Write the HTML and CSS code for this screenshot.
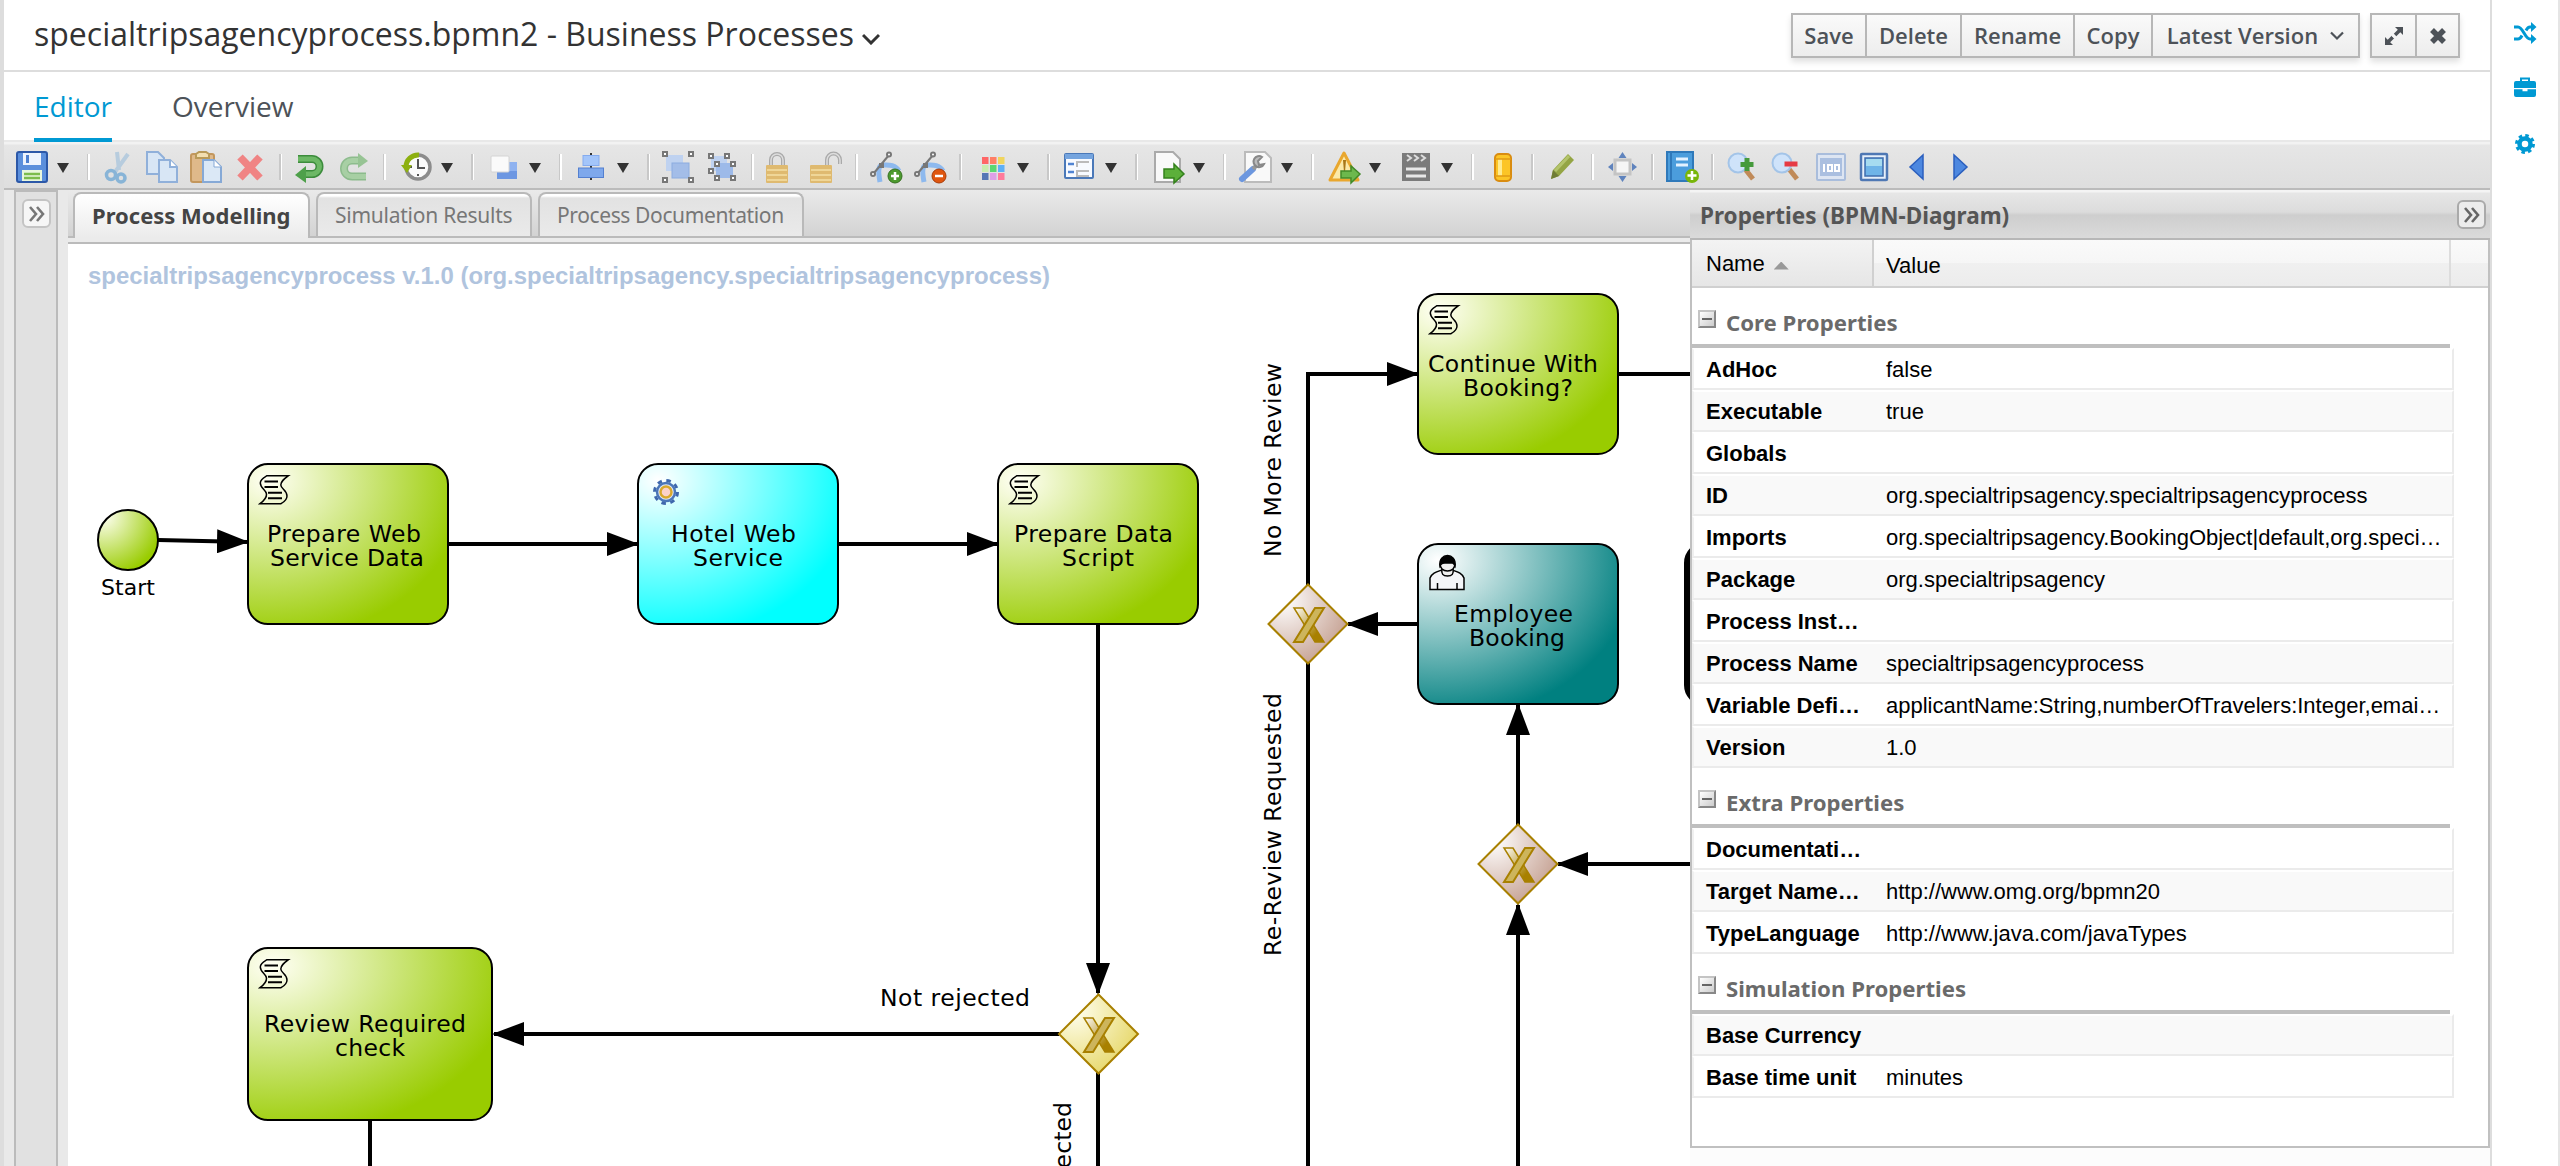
FILE: index.html
```html
<!DOCTYPE html>
<html lang="en">
<head>
<meta charset="utf-8">
<title>specialtripsagencyprocess.bpmn2 - Business Processes</title>
<link rel="stylesheet" href="styles.css">
</head>
<body>
<div class="app">
  <main class="main">
    <header class="header">
      <h1 class="title"><span class="title-text">specialtripsagencyprocess.bpmn2 - Business Processes</span>
        <svg class="title-caret" width="18" height="12" viewBox="0 0 18 12"><path d="M1 2l8 8 8-8" fill="none" stroke="#333" stroke-width="3"/></svg>
      </h1>
      <div class="actions">
        <div class="btn-group">
          <button class="btn w-save"><span>Save</span></button>
          <button class="btn w-delete"><span>Delete</span></button>
          <button class="btn w-rename"><span>Rename</span></button>
          <button class="btn w-copy"><span>Copy</span></button>
          <button class="btn w-version"><span>Latest Version</span>
            <svg width="14" height="10" viewBox="0 0 14 10"><path d="M1 1.500l6 6 6-6" fill="none" stroke="#4d5258" stroke-width="2.200"/></svg></button>
        </div>
        <div class="btn-group">
          <button class="btn w-icon"><svg width="20" height="20" viewBox="0 0 20 20" fill="#4d5258"><path d="M11 1h8v8l-2.700-2.700-4 4-2.500-2.500 4-4zM9 19H1v-8l2.700 2.700 4-4 2.500 2.500-4 4z"/><path d="M8.500 9l2.500 2.500" stroke="#f4f4f4" stroke-width="2.500"/></svg></button>
          <button class="btn w-icon2"><svg width="18" height="18" viewBox="0 0 18 18"><path d="M3 3l12 12M15 3L3 15" stroke="#4d5258" stroke-width="5.500"/></svg></button>
        </div>
      </div>
    </header>
    <nav class="nav">
      <a class="nav-item active"><span>Editor</span></a>
      <a class="nav-item"><span>Overview</span></a>
    </nav>
    <div class="toolbar">
      <span class="tool menu"><svg class="shift" viewBox="0 0 32 32"><rect x="1" y="1" width="30" height="30" rx="2" fill="#5b8fdc" stroke="#2c58a8" stroke-width="2"/><rect x="7" y="2" width="18" height="12" fill="#edf3fd"/><rect x="10" y="4" width="3" height="8" fill="#4d7fcf"/><rect x="6" y="19" width="20" height="11" fill="#e9f7dd"/><path d="M8 23h16M8 27h16" stroke="#7cbc4d" stroke-width="2.500"/></svg></span>
      <i class="sep"></i>
      <span class="tool"><svg viewBox="0 0 32 32" opacity=".75"><path d="M15 1l2 18M26 3L13 21" stroke="#a9c5dd" stroke-width="4"/><circle cx="9" cy="24" r="4.500" fill="none" stroke="#6ba6d4" stroke-width="3.500"/><circle cx="19" cy="27" r="4" fill="none" stroke="#6ba6d4" stroke-width="3.500"/></svg></span>
      <span class="tool"><svg viewBox="0 0 32 32" fill="#d8e6f5" stroke="#90b0da" stroke-width="2"><path d="M1 1h11l6 6v16H1z"/><path d="M13 9h11l7 7v15H13z"/><path d="M24 9v7h7" fill="#fff"/></svg></span>
      <span class="tool"><svg viewBox="0 0 32 32"><rect x="1" y="3" width="23" height="28" rx="2" fill="#dfb98a" stroke="#c3975d" stroke-width="2"/><path d="M6 7V3l3-2h7l3 2v4z" fill="#f3dfb0" stroke="#b99a58" stroke-width="2"/><path d="M13 9h11l7 7v15H13z" fill="#dbe8f6" stroke="#86a9d6" stroke-width="2"/><path d="M24 9v7h7" fill="#fff" stroke="#86a9d6"/></svg></span>
      <span class="tool"><svg viewBox="0 0 32 32"><path d="M6 6l20 21M26 6L6 27" stroke="#f08484" stroke-width="7.500"/></svg></span>
      <i class="sep"></i>
      <span class="tool"><svg viewBox="0 0 32 32"><path d="M4 8h14a7.500 7.500 0 010 15h-9" fill="none" stroke="#3c8c3c" stroke-width="8"/><path d="M4 8h14a7.500 7.500 0 010 15h-9" fill="none" stroke="#6cb865" stroke-width="5"/><path d="M12 15v17L1 24z" fill="#4ea04a"/></svg></span>
      <span class="tool"><svg viewBox="0 0 32 32" opacity=".6"><path d="M28 25.500H14a8 8 0 010-16h9" fill="none" stroke="#55a355" stroke-width="8"/><path d="M28 25.500H14a8 8 0 010-16h9" fill="none" stroke="#82c47c" stroke-width="5"/><path d="M20 2v15l10-7z" fill="#65b060"/></svg></span>
      <i class="sep"></i>
      <span class="tool menu"><svg viewBox="0 0 32 32"><circle cx="20" cy="16" r="12" fill="#fbfbfb" stroke="#8c8c8c" stroke-width="3.500"/><path d="M20 8v9h7M12 16h2M20 23v2" fill="none" stroke="#555" stroke-width="2"/><path d="M21 4A12 12 0 008 16" fill="none" stroke="#8db010" stroke-width="5"/><path d="M3 14h11l-5 8z" fill="#8db010"/></svg></span>
      <i class="sep"></i>
      <span class="tool menu"><svg viewBox="0 0 32 32"><rect x="11" y="11" width="20" height="17" fill="#8fb2f0"/><rect x="11" y="20" width="20" height="8" fill="#6d97e2"/><rect x="5" y="5" width="18" height="16" rx="1" fill="#fafafa" stroke="#d4d4d4"/></svg></span>
      <i class="sep"></i>
      <span class="tool menu"><svg viewBox="0 0 32 32"><path d="M17 2v27" stroke="#333" stroke-width="2"/><rect x="9" y="4.500" width="16" height="10" fill="#a3c5fa" stroke="#84abef"/><rect x="4.500" y="17" width="25" height="9.500" fill="#7ea8ec" stroke="#5480d0"/></svg></span>
      <i class="sep"></i>
      <span class="tool"><svg viewBox="0 0 32 32"><rect x="4" y="4" width="17" height="16" fill="#bfd2f0"/><rect x="10" y="12" width="17" height="15" fill="#a3bde8" stroke="#8cacdf"/><g fill="#fff" stroke="#777" stroke-width="2"><rect x="1" y="1" width="4" height="4"/><rect x="27" y="1" width="4" height="4"/><rect x="1" y="27" width="4" height="4"/><rect x="27" y="27" width="4" height="4"/></g></svg></span>
      <span class="tool"><svg viewBox="0 0 32 32"><rect x="5" y="5" width="16" height="15" fill="#bfd2f0"/><rect x="10" y="12" width="17" height="15" fill="#9dbae9"/><g fill="#fff" stroke="#777" stroke-width="2"><rect x="3" y="3" width="4" height="4"/><rect x="19" y="3" width="4" height="4"/><rect x="3" y="18" width="4" height="4"/><rect x="9" y="11" width="4" height="4"/><rect x="25" y="11" width="4" height="4"/><rect x="9" y="25" width="4" height="4"/><rect x="25" y="25" width="4" height="4"/></g></svg></span>
      <i class="sep"></i>
      <span class="tool"><svg viewBox="0 0 32 32"><path d="M5 16V9a6 6 0 0112 0v7" fill="none" stroke="#aaa" stroke-width="4"/><path d="M5 16V9a6 6 0 0112 0v7" fill="none" stroke="#ddd" stroke-width="1.500"/><rect x="0" y="14" width="22" height="18" rx="1" fill="#dfba70"/><path d="M1 19h20M1 24h20M1 29h20" stroke="#efd697" stroke-width="2"/></svg></span>
      <span class="tool"><svg viewBox="0 0 32 32"><path d="M17 16V9a6 6 0 0113 0v4" fill="none" stroke="#aaa" stroke-width="4"/><path d="M17 16V9a6 6 0 0113 0v4" fill="none" stroke="#ddd" stroke-width="1.500"/><rect x="0" y="14" width="22" height="18" rx="1" fill="#dfba70"/><path d="M1 19h20M1 24h20M1 29h20" stroke="#efd697" stroke-width="2"/></svg></span>
      <i class="sep"></i>
      <span class="tool"><svg viewBox="0 0 32 32"><path d="M10 31C8 20 8 14 13 14s12-1 16 6" fill="none" stroke="#8db9ee" stroke-width="5"/><path d="M4 22L19 4" stroke="#777" stroke-width="2"/><circle cx="3" cy="23" r="2" fill="#fff" stroke="#777" stroke-width="2"/><circle cx="19" cy="3.500" r="2" fill="#fff" stroke="#777" stroke-width="2"/><rect x="9" y="12" width="5" height="5" fill="#777"/><circle cx="25" cy="25" r="7" fill="#4c9a2e" stroke="#35701f"/><path d="M25 21v8M21 25h8" stroke="#fff" stroke-width="2.500"/></svg></span>
      <span class="tool"><svg viewBox="0 0 32 32"><path d="M10 31C8 20 8 14 13 14s12-1 16 6" fill="none" stroke="#8db9ee" stroke-width="5"/><path d="M4 22L19 4" stroke="#777" stroke-width="2"/><circle cx="3" cy="23" r="2" fill="#fff" stroke="#777" stroke-width="2"/><circle cx="19" cy="3.500" r="2" fill="#fff" stroke="#777" stroke-width="2"/><rect x="9" y="12" width="5" height="5" fill="#777"/><circle cx="25" cy="25" r="7" fill="#e0560f" stroke="#a83c08"/><path d="M21 25h8" stroke="#fff" stroke-width="2.500"/></svg></span>
      <i class="sep"></i>
      <span class="tool menu"><svg viewBox="0 0 32 32"><g><rect x="8" y="6" width="6.500" height="7" fill="#ff6666"/><rect x="16" y="6" width="6.500" height="7" fill="#ff7f66"/><rect x="24" y="6" width="6.500" height="7" fill="#f0d55e"/><rect x="8" y="14" width="6.500" height="7" fill="#c9ecae"/><rect x="16" y="14" width="6.500" height="7" fill="#5cd672"/><rect x="24" y="14" width="6.500" height="7" fill="#5fb0f5"/><rect x="8" y="22" width="6.500" height="7" fill="#5577b5"/><rect x="16" y="22" width="6.500" height="7" fill="#dda0e6"/><rect x="24" y="22" width="6.500" height="7" fill="#ff7b9c"/></g></svg></span>
      <i class="sep"></i>
      <span class="tool menu"><svg viewBox="0 0 32 32"><rect x="3" y="3" width="28" height="24" rx="1" fill="#f7faff" stroke="#4a78b8" stroke-width="2"/><rect x="3" y="3" width="28" height="5" fill="#75a4de"/><path d="M6 13h6M6 21h6" stroke="#4f83d2" stroke-width="2.500"/><path d="M27 11H15v5M27 20H15v5h12" fill="none" stroke="#bbb" stroke-width="2"/></svg></span>
      <i class="sep"></i>
      <span class="tool menu"><svg viewBox="0 0 32 32"><path d="M5 1h18l7 7v23H5z" fill="#f9f9f9" stroke="#aaa" stroke-width="2"/><path d="M14 18h10v-5l10 10-10 9v-5H14z" fill="#5cb03a" stroke="#34811c" stroke-width="1.500"/></svg></span>
      <i class="sep"></i>
      <span class="tool menu"><svg viewBox="0 0 32 32"><path d="M7 1h20l6 6v24H7z" fill="#f9f9f9" stroke="#bbb" stroke-width="2"/><path d="M4 28L15 18" stroke="#6c97df" stroke-width="6" stroke-linecap="round"/><path d="M15 18l4-4" stroke="#999" stroke-width="4"/><path d="M24 6a5.500 5.500 0 102 7l-5 1-1-4z" fill="#bbb" stroke="#888" stroke-width="2"/></svg></span>
      <i class="sep"></i>
      <span class="tool menu"><svg viewBox="0 0 32 32"><path d="M18 2l14 27H4z" fill="#fbe9a8" stroke="#e9a72e" stroke-width="3" stroke-linejoin="round"/><path d="M17 9h3l-1 12h-1z" fill="#a87718"/><path d="M15 20h10v-5l9 8-9 9v-5H15z" fill="#6cb84d" stroke="#418a28" stroke-width="1.500"/></svg></span>
      <span class="tool menu"><svg viewBox="0 0 32 32"><rect x="4" y="2" width="28" height="28" fill="#7b7b7b"/><path d="M9 4l4 3-4 3M16 4l4 3-4 3M23 4l4 3-4 3" fill="none" stroke="#ddd" stroke-width="2"/><path d="M8 18h20M8 25h20" stroke="#e8e8e8" stroke-width="3"/></svg></span>
      <i class="sep"></i>
      <span class="tool"><svg viewBox="0 0 32 32"><rect x="9" y="3" width="16" height="27" rx="4" fill="#fcc526" stroke="#d98c10" stroke-width="2"/><rect x="12" y="8" width="4" height="17" fill="#ffeb90"/><path d="M9 8h16M9 25h16" stroke="#e09a14" stroke-width="1.500"/></svg></span>
      <i class="sep"></i>
      <span class="tool"><svg viewBox="0 0 32 32"><path d="M5 28l2-9L22 3l6 6-15 16z" fill="#94a544"/><path d="M9 20L23 5" stroke="#b4c46c" stroke-width="3"/><path d="M5 28l2-9 6 6z" fill="#707d36"/></svg></span>
      <i class="sep"></i>
      <span class="tool"><svg viewBox="0 0 32 32"><rect x="9" y="9" width="15" height="14" fill="#f5f5f5" stroke="#c4c4c4" stroke-width="3"/><path d="M16.500 1l4 6h-8zM16.500 31l4-6h-8zM2 16l5-4v8zM31 16l-5-4v8z" fill="#5f83bd"/></svg></span>
      <i class="sep"></i>
      <span class="tool"><svg viewBox="0 0 32 32"><rect x="1" y="1" width="26" height="29" fill="#4b9ddc" stroke="#2f79ba" stroke-width="2"/><path d="M5 1v29" stroke="#2f79ba" stroke-width="2"/><path d="M10 8h12M10 14h12" stroke="#e3f2ff" stroke-width="3"/><circle cx="26" cy="25" r="7" fill="#78b60a"/><path d="M26 20v9M21.500 24.500h9" stroke="#fff" stroke-width="2.500"/></svg></span>
      <i class="sep"></i>
      <span class="tool"><svg viewBox="0 0 32 32"><path d="M19 18l8 10" stroke="#c08a58" stroke-width="5"/><circle cx="12" cy="12" r="9.500" fill="#cfe3fa" stroke="#a3c4e8" stroke-width="2"/><path d="M21 7v13M14.500 13.500h13" stroke="#459a3c" stroke-width="5"/></svg></span>
      <span class="tool"><svg viewBox="0 0 32 32"><path d="M19 18l8 10" stroke="#c08a58" stroke-width="5"/><circle cx="12" cy="12" r="9.500" fill="#cfe3fa" stroke="#a3c4e8" stroke-width="2"/><path d="M14.500 13h13" stroke="#e63a44" stroke-width="5"/></svg></span>
      <span class="tool"><svg viewBox="0 0 32 32"><rect x="3" y="3" width="28" height="26" rx="1" fill="#dde5f2" stroke="#a9bddc" stroke-width="2"/><rect x="6" y="7" width="22" height="18" fill="#aabfe0"/><path d="M10 13v8M14 14h4v6h-4zM21 14h4v6h-4z" fill="none" stroke="#fff" stroke-width="2"/></svg></span>
      <span class="tool"><svg viewBox="0 0 32 32"><rect x="3" y="3" width="26" height="26" rx="1" fill="#e6effa" stroke="#4f78b4" stroke-width="2.500"/><rect x="7" y="7" width="18" height="18" fill="#6fb4e8" stroke="#3f6eae" stroke-width="1.500"/><rect x="8" y="8" width="16" height="7" fill="#a6dbf0"/></svg></span>
      <span class="tool"><svg viewBox="0 0 32 32"><path d="M21 4v24L8 16z" fill="#4d88e0" stroke="#2b5fbe" stroke-width="1.500"/></svg></span>
      <span class="tool"><svg viewBox="0 0 32 32"><path d="M8 4v24l13-12z" fill="#4d88e0" stroke="#2b5fbe" stroke-width="1.500"/></svg></span>
    </div>
    <div class="workspace">
      <aside class="west">
        <span class="expander"><svg width="18" height="16" viewBox="0 0 18 16"><path d="M2 1l6 7-6 7M9 1l6 7-6 7" fill="none" stroke="#777" stroke-width="2.600"/></svg></span>
      </aside>
      <section class="center">
        <div class="tabs">
          <div class="tab on t1"><span>Process Modelling</span></div>
          <div class="tab t2"><span>Simulation Results</span></div>
          <div class="tab t3"><span>Process Documentation</span></div>
        </div>
        <div class="strip"></div>
        <svg class="canvas" width="1622" height="922" viewBox="68 244 1622 922">
          <defs>
            <radialGradient id="green" cx="10%" cy="10%" r="100%" fx="10%" fy="10%"><stop offset="0" stop-color="#fffff4"/><stop offset="1" stop-color="#99cc00"/></radialGradient>
            <radialGradient id="cyan" cx="10%" cy="10%" r="100%"><stop offset="0" stop-color="#fff"/><stop offset="1" stop-color="#00ffff"/></radialGradient>
            <radialGradient id="teal" cx="10%" cy="10%" r="100%"><stop offset="0" stop-color="#fff"/><stop offset="1" stop-color="#008080"/></radialGradient>
            <radialGradient id="rose" cx="20%" cy="20%" r="90%"><stop offset="0" stop-color="#fff"/><stop offset="1" stop-color="#c49f90"/></radialGradient>
            <radialGradient id="sand" cx="20%" cy="20%" r="90%"><stop offset="0" stop-color="#fffff0"/><stop offset="1" stop-color="#e6d768"/></radialGradient>
            <linearGradient id="gold" x1="0" y1="0" x2="1" y2="1"><stop offset="0" stop-color="#fff"/><stop offset=".75" stop-color="#a88000"/></linearGradient>
            <marker id="arrow" markerUnits="userSpaceOnUse" markerWidth="32" markerHeight="24" refX="30" refY="12" orient="auto"><path d="M0 0l32 12L0 24z"/></marker>
            <g id="script" stroke="#000"><path d="M19 11.700H40.500C36 15 33 17 32.800 21C33 25 39 26 39 32C39 36 36 38 33 39.700H12C17 36 18.700 33 18.500 30C18 26 12.300 24 12.300 19C12.500 15 16 13.500 19 11.700Z" fill="none" stroke-width="1.500"/><path d="M16.500 17.500H30M16.500 23H30M20 28.700H34M20 34.300H34" stroke-width="2"/></g>
            <g id="xor"><path d="M-15 -17H-6L15 17H6Z" fill="url(#gold)" stroke="#a88000" stroke-width="1.500"/><path d="M6 -17H15L-6 17H-15Z" fill="#cdb55c" stroke="#a88000" stroke-width="2"/></g>
          </defs>
          <text class="process-name" x="88" y="284" textLength="962" lengthAdjust="spacingAndGlyphs">specialtripsagencyprocess v.1.0 (org.specialtripsagency.specialtripsagencyprocess)</text>

          <g class="nodes">
            <circle cx="128" cy="540" r="30" fill="url(#green)"/>
            <rect x="248" y="464" width="200" height="160" rx="20" fill="url(#green)"/>
            <rect x="638" y="464" width="200" height="160" rx="20" fill="url(#cyan)"/>
            <rect x="998" y="464" width="200" height="160" rx="20" fill="url(#green)"/>
            <rect x="1418" y="294" width="200" height="160" rx="20" fill="url(#green)"/>
            <rect x="1418" y="544" width="200" height="160" rx="20" fill="url(#teal)"/>
            <rect x="248" y="948" width="244" height="172" rx="20" fill="url(#green)"/>
            <rect x="1685" y="543" width="200" height="162" rx="20" fill="#000"/>
          </g>
          <g class="edges">
            <path d="M158 540L247 542"/>
            <path d="M448 544H637"/>
            <path d="M838 544H997"/>
            <path d="M1098 624V993"/>
            <path d="M1059 1034H494"/>
            <path d="M1308 585V374H1417"/>
            <path d="M1418 624H1348"/>
            <path d="M1518 826V705"/>
            <path d="M1518 1166V905"/>
            <path d="M1690 864H1558"/>
            <path class="plain" d="M1618 374H1690M1308 662V1166M1098 1072V1166M370 1119V1166"/>
          </g>
          <g stroke="#a88000" stroke-width="2">
            <path d="M1308 584.500l39.500 39.500-39.500 39.500-39.500-39.500z" fill="url(#rose)"/>
            <path d="M1518 824.500l39.500 39.500-39.500 39.500-39.500-39.500z" fill="url(#rose)"/>
            <path d="M1098.500 994.500l39.500 39.500-39.500 39.500-39.500-39.500z" fill="url(#sand)"/>
          </g>
          <use href="#xor" x="1309" y="625"/><use href="#xor" x="1519" y="865"/><use href="#xor" x="1099" y="1035"/>
          <use href="#script" x="248" y="464"/><use href="#script" x="998" y="464"/><use href="#script" x="1418" y="294"/><use href="#script" x="248" y="948"/>
          <g fill="none"><circle cx="666" cy="492" r="11.500" stroke="#3f68ad" stroke-width="3" stroke-dasharray="4.500 4.530"/><circle cx="666" cy="492" r="9" fill="#dfe8f8" stroke="#4b76b8" stroke-width="2.500"/><circle cx="666" cy="492" r="5.500" fill="#fbd2c8" stroke="#d9a92c" stroke-width="2.500"/></g>
          <g transform="translate(1418 544)" stroke="#000" stroke-width="1.500"><path d="M12 45.500V34c2-5 6-6 12-8h10c6 2 10 3 12 8v11.500z" fill="#f4f5f8"/><path d="M19.500 39v6.500M39 39v6.500" /><path d="M24 25c-1 5 1 7 5.500 7s6.500-2 5.500-7" fill="#f0f0f0"/><path d="M22 20c0 4 3 7 7.500 7s7.500-3 7.500-7" fill="#f0f0f0"/><path d="M22 22c-2-14 17-14 15 0-2-4-3-3-7-3s-6-1-8 3z"/></g>
          <g class="labels">
            <text x="101" y="595" textLength="54" class="small">Start</text>
            <text x="267" y="541.500" textLength="154">Prepare Web</text><text x="270" y="565.500" textLength="154">Service Data</text>
            <text x="671" y="541.500" textLength="125">Hotel Web</text><text x="693" y="565.500" textLength="90">Service</text>
            <text x="1014" y="541.500" textLength="159">Prepare Data</text><text x="1062" y="565.500" textLength="72">Script</text>
            <text x="1428" y="371.500" textLength="170">Continue With</text><text x="1463" y="395.500" textLength="110">Booking?</text>
            <text x="1454" y="621.500" textLength="119">Employee</text><text x="1469" y="645.500" textLength="96">Booking</text>
            <text x="264" y="1031.500" textLength="202">Review Required</text><text x="335" y="1055.500" textLength="70">check</text>
            <text x="880" y="1005.500" textLength="150">Not rejected</text>
            <text transform="translate(1280.500 557) rotate(-90)" textLength="194">No More Review</text>
            <text transform="translate(1280.500 956) rotate(-90)" textLength="263">Re-Review Requested</text>
            <text transform="translate(1071 1205) rotate(-90)" textLength="103">Rejected</text>
          </g>
        </svg>
      </section>
      <aside class="props">
        <div class="props-head"><span>Properties (BPMN-Diagram)</span>
          <span class="expander"><svg width="18" height="16" viewBox="0 0 18 16"><path d="M2 1l6 7-6 7M9 1l6 7-6 7" fill="none" stroke="#666" stroke-width="2.600"/></svg></span></div>
        <div class="props-body">
          <div class="cols"><div class="col-name"><span>Name</span><i class="sort"></i></div><div class="col-value"><span>Value</span></div><div class="col-end"></div></div>
          <div class="group"><i class="minus"></i><span>Core Properties</span></div>
          <div class="row"><b>AdHoc</b><span>false</span></div>
          <div class="row alt"><b>Executable</b><span>true</span></div>
          <div class="row"><b>Globals</b><span></span></div>
          <div class="row alt"><b>ID</b><span>org.specialtripsagency.specialtripsagencyprocess</span></div>
          <div class="row"><b>Imports</b><span>org.specialtripsagency.BookingObject|default,org.speci…</span></div>
          <div class="row alt"><b>Package</b><span>org.specialtripsagency</span></div>
          <div class="row"><b>Process Inst…</b><span></span></div>
          <div class="row alt"><b>Process Name</b><span>specialtripsagencyprocess</span></div>
          <div class="row"><b>Variable Defi…</b><span>applicantName:String,numberOfTravelers:Integer,emai…</span></div>
          <div class="row alt"><b>Version</b><span>1.0</span></div>
          <div class="group"><i class="minus"></i><span>Extra Properties</span></div>
          <div class="row"><b>Documentati…</b><span></span></div>
          <div class="row alt"><b>Target Name…</b><span>http://www.omg.org/bpmn20</span></div>
          <div class="row"><b>TypeLanguage</b><span>http://www.java.com/javaTypes</span></div>
          <div class="group"><i class="minus"></i><span>Simulation Properties</span></div>
          <div class="row alt"><b>Base Currency</b><span></span></div>
          <div class="row"><b>Base time unit</b><span>minutes</span></div>
        </div>
      </aside>
    </div>
  </main>
  <aside class="rail">
    <svg width="24" height="22" viewBox="0 0 24 22" fill="none" stroke="#0099d3" stroke-width="3"><path d="M1 5h4c5 0 7 12 12 12h2M1 17h4c2 0 3-1.500 4-3.500M13 8.500C14 6.500 15 5 17 5h2"/><path d="M18 0l5.500 5L18 10zM18 12l5.500 5-5.500 5z" fill="#0099d3" stroke="none"/></svg>
    <svg width="24" height="20" viewBox="0 0 24 20"><path d="M8 4V1.500h8V4" fill="none" stroke="#0099d3" stroke-width="2"/><path d="M3 4h18a2 2 0 012 2v5H1V6a2 2 0 012-2zM1 12.200h8.500v2h5v-2H23V18a2 2 0 01-2 2H3a2 2 0 01-2-2z" fill="#0099d3"/></svg>
    <svg width="20" height="20" viewBox="0 0 20 20"><circle cx="10" cy="10" r="5.500" fill="none" stroke="#0099d3" stroke-width="4.500"/><circle cx="10" cy="10" r="8.500" fill="none" stroke="#0099d3" stroke-width="3" stroke-dasharray="3.500 3.176"/></svg>
  </aside>
</div>
</body>
</html>
```
FILE: styles.css
```css
* { box-sizing: border-box; }
body { margin: 0; background: #fff; font-family: "Open Sans", sans-serif; overflow: hidden; }
svg { display: block; flex: none; }
.app { display: flex; width: 2560px; height: 1166px; border-left: 4px solid #ddd; }
.main { width: 2488px; flex: none; border-right: 2px solid #ddd; display: flex; flex-direction: column; }
.header { height: 72px; border-bottom: 2px solid #ddd; display: flex; justify-content: space-between; padding: 13px 30px 0 30px; }
.title { margin: 0; font-size: 32px; font-weight: 400; line-height: 42px; color: #333; display: flex; align-items: flex-start; gap: 8px; white-space: nowrap; }
.title-caret { margin-top: 20px; }
.actions { display: flex; gap: 10px; }
.btn-group { display: flex; height: 45px; border: 2px solid #b7b7b7; box-shadow: 0 4px 6px rgba(0,0,0,.12); }
.btn { border: 0; border-right: 2px solid #b7b7b7; padding: 0; background: linear-gradient(#fafafa, #ededed); display: flex; align-items: center; justify-content: center; gap: 12px; font: 600 22px/41px "Open Sans", sans-serif; color: #4d5258; white-space: nowrap; }
.btn:last-child { border-right: 0; }
.w-save { width: 74px; } .w-delete { width: 95px; } .w-rename { width: 113px; } .w-copy { width: 78px; } .w-version { width: 205px; }
.w-icon { width: 45px; } .w-icon2 { width: 41px; }
.nav { height: 70px; border-bottom: 2px solid #e8e8e8; display: flex; gap: 60px; padding-left: 30px; }
.nav-item { height: 70px; padding-top: 14px; font-size: 28px; line-height: 40px; color: #4d5258; }
.nav-item.active { color: #0099d3; border-bottom: 4px solid #0099d3; }
.toolbar { height: 48px; display: flex; align-items: flex-start; padding: 9px 0 0 10px; background: linear-gradient(#f2f2f2 0 2px, #e6e6e6 3px, #dedede); border-bottom: 2px solid #bbb; }
.tool { width: 44px; height: 32px; flex: none; display: flex; }
.tool svg { width: 32px; height: 32px; overflow: visible; }
.tool.menu { width: 72px; }
.tool.menu::after { content: ""; margin: 12px 0 0 11px; width: 12px; height: 10px; background: #333; clip-path: polygon(0 0, 100% 0, 50% 100%); }
.tool .shift { transform: translateX(2px); }
.sep { width: 3px; height: 26px; margin: 3px 12px 0 1px; background: linear-gradient(90deg, #c8c8c8 0 50%, #fff 50%); flex: none; }
.workspace { height: 976px; display: flex; background: #e9e9e9; }
.west { width: 44px; margin: 0 10px; flex: none; border: 2px solid #bbb; border-bottom: 0; background: #e1e1e1; padding: 7px 0 0 6px; }
.expander { width: 29px; height: 29px; flex: none; border: 2px solid #c4c4c4; border-radius: 6px; background: #f6f6f6; display: flex; align-items: center; justify-content: center; }
.props-head .expander { border-color: #aaa; background: #ececec; }
.center { width: 1622px; flex: none; }
.tabs { height: 48px; display: flex; align-items: flex-start; gap: 6px; padding: 2px 0 0 5px; border-bottom: 2px solid #bbb; background: linear-gradient(#eaeaea, #d3d3d3); font-family: "Noto Sans", sans-serif; }
.tab { height: 44px; border: 2px solid #b9b9b9; border-bottom: 0; border-radius: 8px 8px 0 0; padding-left: 17px; font-size: 21px; line-height: 43px; letter-spacing: -.25px; color: #777; white-space: nowrap; background: linear-gradient(#fff 0 2px, #e2e2e2 4px, #eaeaea); }
.tab.on { height: 46px; background: linear-gradient(#fff, #ebebeb); color: #444; font-weight: 700; font-size: 22px; letter-spacing: 0; }
.t1 { width: 237px; } .t2 { width: 216px; } .t3 { width: 266px; }
.tab.t3 { letter-spacing: -.38px; }
.strip { height: 6px; background: #ebebeb; border-bottom: 2px solid #bbb; }
.canvas { background: #fff; }
.process-name { font: 700 24px "Liberation Sans", sans-serif; fill: #b0c4de; }
.nodes { stroke: #000; stroke-width: 2; }
.edges { fill: none; stroke: #000; stroke-width: 4; }
.edges path { marker-end: url(#arrow); }
.edges .plain { marker-end: none; }
.labels { font: 23.500px "DejaVu Sans", sans-serif; }
.small { font-size: 22px; }
.props { flex: 1; background: #fcfcfc; }
.props-head { height: 50px; border-bottom: 2px solid #b7b7b7; display: flex; justify-content: space-between; padding: 10px 4px 0 10px; background: linear-gradient(#f4f4f4 0 2px, #e6e6e6 3px, #dcdcdc 22px, #cecece 25px, #dadada); font: 700 22.500px/32px "Noto Sans", sans-serif; color: #555; }
.props-body { height: 908px; border: 2px solid #c0c0c0; border-top: 0; background: #fff; font: 22px/36px "Liberation Sans", sans-serif; color: #000; }
.cols { display: flex; height: 48px; border-bottom: 2px solid #d0d0d0; background: linear-gradient(#fafafa, #f6f6f6 50%, #f0f0f0 50%, #ececec); line-height: 51px; }
.col-name { width: 182px; padding-left: 14px; display: flex; gap: 9px; align-items: center; border-right: 2px solid #d0d0d0; background: linear-gradient(#f3f3f3, #e6e6e6); }
.sort { width: 15px; height: 8px; margin-top: 5px; background: #999; clip-path: polygon(50% 0, 100% 100%, 0 100%); }
.col-value { width: 577px; padding-left: 12px; border-right: 2px solid #ddd; }
.group { width: 758px; height: 60px; border-bottom: 4px solid #bfbfbf; display: flex; align-items: flex-start; padding: 18px 0 0 6px; gap: 10px; color: #6a6a6a; font: 700 22.200px/34px "Noto Sans", sans-serif; }
.minus { width: 18px; height: 18px; margin-top: 4px; border: 2px solid #999; border-color: #c4c4c4 #888 #888 #c4c4c4; background: linear-gradient(#666, #666) center/10px 2px no-repeat, linear-gradient(135deg, #fff, #ccc); }
.row { width: 762px; height: 42px; border: 2px solid #ebebeb; border-top-color: #fff; border-left-color: #f0f0f0; display: flex; padding-left: 12px; line-height: 40px; white-space: nowrap; background: #fff; }
.row.alt { background: #f9f9f9; }
.row b { width: 180px; flex: none; }
.rail { width: 68px; border-right: 2px solid #e5e5e5; display: flex; flex-direction: column; align-items: center; padding-top: 22px; }
.rail svg:nth-child(2) { margin-top: 33px; }
.rail svg:nth-child(3) { margin-top: 37px; }
```
